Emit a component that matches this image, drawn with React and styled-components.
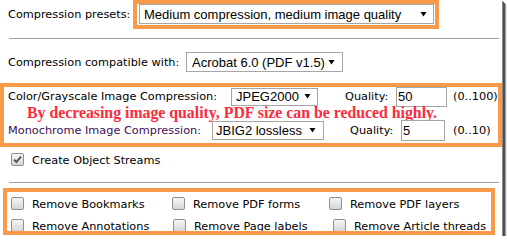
import React from 'react';
import styled, { createGlobalStyle } from 'styled-components';

const GlobalStyle = createGlobalStyle`
  html, body { margin: 0; padding: 0; background: #fff; }
  body {
    font-family: "DejaVu Sans", Verdana, sans-serif;
    font-size: 11.3px;
    color: #000;
  }
`;

const ORANGE = '#f9994a';

const Frame = styled.div`
  width: 502px;
  height: 236px;
  background: #fff;
  overflow: hidden;
  box-shadow: 1px 1px 0 #8c8c8c, 2px 2px 0 #4d4d4d, 3px 3px 0 #555, 4px 4px 1px #9a9a9a;
`;

const Row = styled.div`
  display: flex;
  align-items: center;
  height: ${(p) => p.$h}px;
  margin-top: ${(p) => p.$mt || 0}px;
  padding-left: ${(p) => p.$pl || 0}px;
`;

const Label = styled.span`
  flex: none;
  width: ${(p) => p.$w}px;
  white-space: nowrap;
  color: ${(p) => p.$color || '#000'};
`;

const PresetHighlight = styled.div`
  display: flex;
  border: 4px solid ${ORANGE};
  padding: 0 1px 1px 2px;
`;

const Panel = styled.div`
  box-sizing: border-box;
  width: ${(p) => p.$w}px;
  margin: ${(p) => p.$mt}px 0 0 ${(p) => p.$ml || 0}px;
  border: 4px solid ${ORANGE};
  padding: ${(p) => p.$pad};
  ${(p) => (p.$h ? `height: ${p.$h}px; overflow: hidden;` : '')}
`;

const SelectBox = styled.div`
  flex: none;
  box-sizing: border-box;
  display: flex;
  align-items: center;
  justify-content: space-between;
  width: ${(p) => p.$w}px;
  height: ${(p) => p.$h}px;
  padding: 0 ${(p) => p.$pr}px 0 ${(p) => p.$pl}px;
  border: 1px solid #a5a5a5;
  background: #fff;
  font-family: "Liberation Sans", Arial, sans-serif;
  font-size: 13px;
  color: #000;
  white-space: nowrap;
`;

const Arrow = styled.svg`
  flex: none;
  display: block;
`;

const Select = ({ value, w, h, pl, pr }) => (
  <SelectBox $w={w} $h={h} $pl={pl} $pr={pr}>
    <span>{value}</span>
    <Arrow width="7" height="5" viewBox="0 0 7 5">
      <polygon points="0.5,0 6.5,0 3.5,4.5" fill="#000" />
    </Arrow>
  </SelectBox>
);

const Divider = styled.div`
  width: 490px;
  margin: ${(p) => p.$mt}px 0 0 9px;
  border-top: 1px solid #a0a0a0;
`;

const QualityLabel = styled.span`
  flex: none;
  width: ${(p) => p.$w}px;
  margin-left: ${(p) => p.$ml}px;
  white-space: nowrap;
`;

const NumberInput = styled.input`
  flex: none;
  box-sizing: border-box;
  width: ${(p) => p.$w}px;
  height: ${(p) => p.$h}px;
  margin: 0;
  padding: 0 0 0 1px;
  border: 1px solid #a5a5a5;
  background: #fff;
  font-family: "Liberation Sans", Arial, sans-serif;
  font-size: 13px;
  color: #000;
  outline: none;
`;

const Range = styled.span`
  flex: none;
  margin-left: ${(p) => p.$ml}px;
  white-space: nowrap;
`;

const RedNote = styled.div`
  height: 13px;
  line-height: 13px;
  padding-left: 19px;
  white-space: nowrap;
  font-family: "Liberation Serif", "Times New Roman", serif;
  font-weight: bold;
  font-size: 15.8px;
  color: #fd2b3b;
`;

const Box = styled.span`
  flex: none;
  box-sizing: border-box;
  width: 13px;
  height: 13px;
  margin-bottom: 2px;
  border: 1px solid #8e8f8f;
  border-radius: 2px;
  background: linear-gradient(#f6f6f6, #d6d6d6);
  display: flex;
  align-items: center;
  justify-content: center;
`;

const Checkbox = ({ checked }) => (
  <Box>
    {checked && (
      <svg width="9" height="9" viewBox="0 0 9 9">
        <path d="M1 4.6 L3.4 7 L8 1.6" fill="none" stroke="#4a4a4a" strokeWidth="1.8" />
      </svg>
    )}
  </Box>
);

const Option = styled.label`
  display: flex;
  align-items: center;
  gap: 8px;
  white-space: nowrap;
`;

const OptionGrid = styled.div`
  display: grid;
  grid-template-columns: ${(p) => p.$cols};
  align-items: center;
  height: 22px;
`;

export default function App() {
  return (
    <>
      <GlobalStyle />
      <Frame>
        <Row $h={29} $pl={8}>
          <Label $w={125}>Compression presets:</Label>
          <PresetHighlight>
            <Select value="Medium compression, medium image quality" w={295} h={20} pl={4} pr={6} />
          </PresetHighlight>
        </Row>

        <Divider $mt={9} />

        <Row $h={20} $mt={13} $pl={8}>
          <Label $w={178}>Compression compatible with:</Label>
          <Select value="Acrobat 6.0 (PDF v1.5)" w={157} h={20} pl={5} pr={7} />
        </Row>

        <Panel $w={502} $mt={11} $pad="0 4px 2px 4px">
          <Row $h={19}>
            <Label $w={223}>Color/Grayscale Image Compression:</Label>
            <Select value="JPEG2000" w={87} h={18} pl={4} pr={6} />
            <QualityLabel $ml={27} $w={51}>Quality:</QualityLabel>
            <NumberInput $w={51} $h={20} defaultValue="50" />
            <Range $ml={6}>(0..100)</Range>
          </Row>
          <RedNote>By decreasing image quality, PDF size can be reduced highly.</RedNote>
          <Row $h={21} $mt={1}>
            <Label $w={204} $color="#3c1053">Monochrome Image Compression:</Label>
            <Select value="JBIG2 lossless" w={112} h={19} pl={3} pr={7} />
            <QualityLabel $ml={26} $w={51}>Quality:</QualityLabel>
            <NumberInput $w={44} $h={21} defaultValue="5" />
            <Range $ml={8}>(0..10)</Range>
          </Row>
        </Panel>

        <Row $h={14} $mt={6} $pl={11}>
          <Option>
            <Checkbox checked />
            Create Object Streams
          </Option>
        </Row>

        <Divider $mt={15} />

        <Panel $w={492} $h={47} $mt={5} $ml={3} $pad="1px 0 0 4px">
          <OptionGrid $cols="161px 157px 1fr">
            <Option><Checkbox />Remove Bookmarks</Option>
            <Option><Checkbox />Remove PDF forms</Option>
            <Option><Checkbox />Remove PDF layers</Option>
          </OptionGrid>
          <OptionGrid $cols="162px 160px 1fr">
            <Option><Checkbox />Remove Annotations</Option>
            <Option><Checkbox />Remove Page labels</Option>
            <Option><Checkbox />Remove Article threads</Option>
          </OptionGrid>
        </Panel>
      </Frame>
    </>
  );
}
